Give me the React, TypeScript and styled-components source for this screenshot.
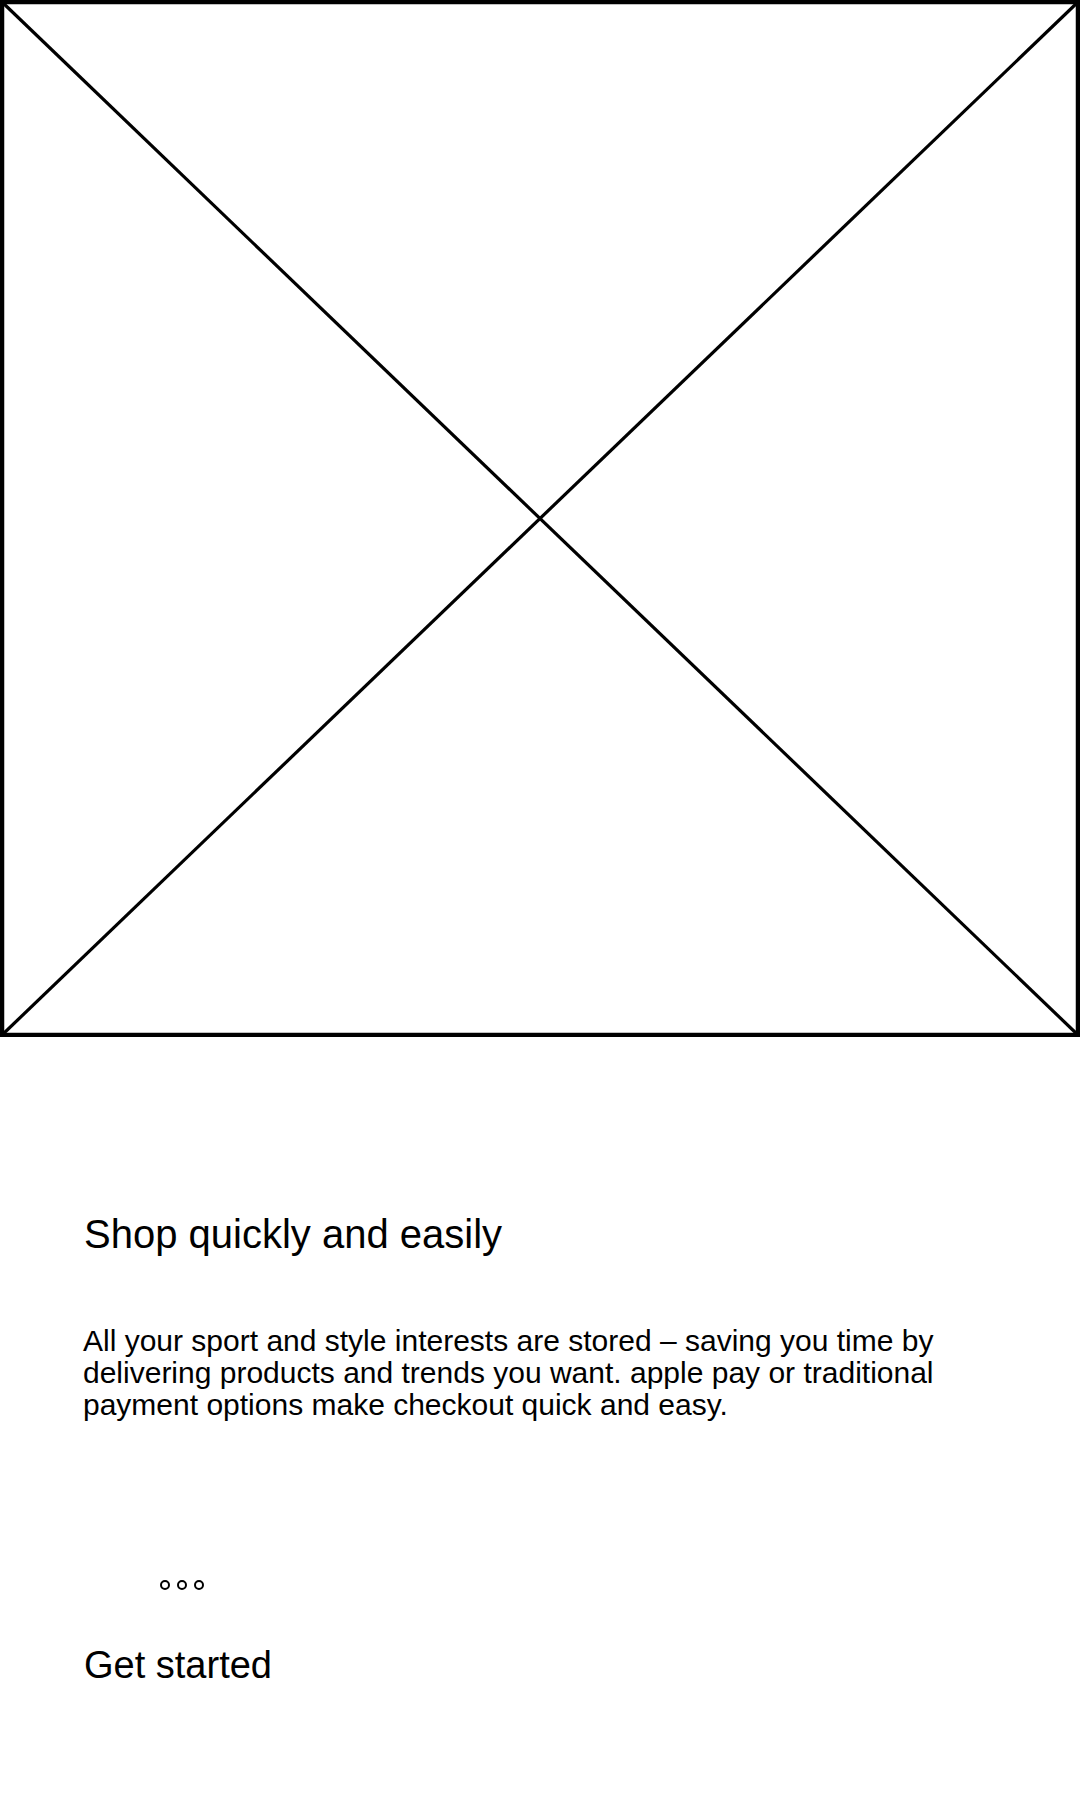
import styled, { createGlobalStyle } from "styled-components";

const GlobalStyle = createGlobalStyle`
    html, body {
        margin: 0;
        padding: 0;
        background: #fff;
    }
    body {
        font-family: "Liberation Sans", Arial, sans-serif;
        color: #000;
    }
`;

const Screen = styled.div`
    width: 1080px;
    min-height: 1800px;
    display: flex;
    flex-direction: column;
`;

const Hero = styled.svg`
    display: block;
    width: 1080px;
    height: 1037px;
`;

const Content = styled.div`
    display: flex;
    flex-direction: column;
    padding: 0 100px 0 84px;
`;

const Title = styled.h1`
    margin: 174px 0 0;
    font-size: 40px;
    font-weight: 400;
    line-height: 47px;
`;

const Text = styled.p`
    margin: 67px 0 0 -1px;
    font-size: 30px;
    line-height: 32px;
`;

const Dots = styled.div`
    display: flex;
    gap: 7px;
    margin: 159px 0 0 76px;
`;

const Dot = styled.span`
    width: 10px;
    height: 10px;
    box-sizing: border-box;
    border: 2.5px solid #000;
    border-radius: 50%;
`;

const Action = styled.button`
    align-self: flex-start;
    margin: 53px 0 0;
    padding: 0;
    border: none;
    background: none;
    font-family: "Liberation Sans", Arial, sans-serif;
    font-size: 38px;
    line-height: 44px;
    color: #000;
    cursor: pointer;
`;

const App = () => {
    return (
        <Screen>
            <GlobalStyle />
            <Hero viewBox="0 0 1080 1037">
                <rect x="2" y="2" width="1076" height="1033" fill="none" stroke="#000" strokeWidth="4.5" />
                <line x1="2" y1="2" x2="1078" y2="1035" stroke="#000" strokeWidth="3.2" />
                <line x1="1078" y1="2" x2="2" y2="1035" stroke="#000" strokeWidth="3.2" />
            </Hero>
            <Content>
                <Title>Shop quickly and easily</Title>
                <Text>
                    All your sport and style interests are stored – saving you time by delivering products and trends you want. apple pay or traditional payment options make checkout quick and easy.
                </Text>
                <Dots>
                    <Dot />
                    <Dot />
                    <Dot />
                </Dots>
                <Action>Get started</Action>
            </Content>
        </Screen>
    );
};

export default App;
